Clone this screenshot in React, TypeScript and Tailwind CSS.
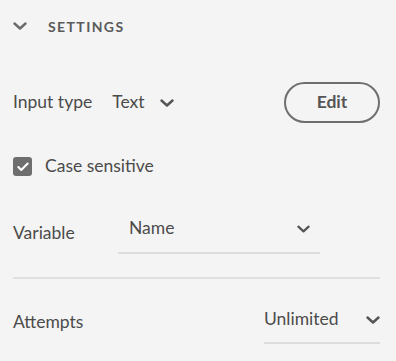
import { Check } from "lucide-react";

function Chevron({ className }: { className?: string }) {
  return (
    <svg viewBox="0 0 14 8" className={className} fill="none">
      <path d="M1.5 1.5 L7 6.5 L12.5 1.5" stroke="currentColor" strokeWidth="2.4" strokeLinecap="round" strokeLinejoin="round" />
    </svg>
  );
}

export default function App() {
  return (
    <div className="min-h-[361px] w-[396px] bg-[#f4f4f4] pl-[13px] pr-[16px] font-['Lato',sans-serif] text-[#4b4b4b]">
      <div className="flex h-[52px] items-center">
        <Chevron className="h-[8px] w-[14px] text-[#6a6a6a]" />
        <span className="ml-[21px] text-[14px] font-bold tracking-[0.1em] text-[#5a5a5a]">SETTINGS</span>
      </div>

      <div className="mt-[30px] flex h-[41px] items-center">
        <span className="text-[17.5px]">Input type</span>
        <span className="ml-[20px] text-[17.5px]">Text</span>
        <Chevron className="ml-[15px] mt-[1px] h-[8px] w-[14px] text-[#555]" />
        <button className="ml-auto flex h-[41px] w-[96px] items-center justify-center rounded-full border-2 border-[#6e6e6e] text-[17.5px] font-bold text-[#555]">
          Edit
        </button>
      </div>

      <div className="mt-[34px] flex h-[19px] items-center">
        <span className="flex h-[19px] w-[19px] items-center justify-center rounded-[3px] bg-[#6e6e6e]">
          <Check className="h-[14px] w-[14px] text-white" strokeWidth={3.5} />
        </span>
        <span className="ml-[13px] text-[17.5px]">Case sensitive</span>
      </div>

      <div className="mt-[36px] flex h-[42px] items-center">
        <span className="w-[105px] text-[17.5px]">Variable</span>
        <div className="flex h-[42px] w-[202px] items-center border-b-2 border-[#dcdcdc] pb-[8px] pl-[11px] pr-[10px]">
          <span className="text-[17.5px]">Name</span>
          <Chevron className="ml-auto mt-[2px] h-[8px] w-[13px] text-[#555]" />
        </div>
      </div>

      <div className="mt-[23px] h-[2px] bg-[#e0e0e0]" />

      <div className="mt-[21px] flex h-[44px] items-center">
        <span className="text-[17.5px]">Attempts</span>
        <div className="ml-auto flex h-[44px] w-[116px] items-center border-b-2 border-[#dcdcdc] pb-[4px]">
          <span className="text-[17.5px]">Unlimited</span>
          <Chevron className="ml-auto mt-[1px] h-[8px] w-[14px] text-[#555]" />
        </div>
      </div>
    </div>
  );
}
